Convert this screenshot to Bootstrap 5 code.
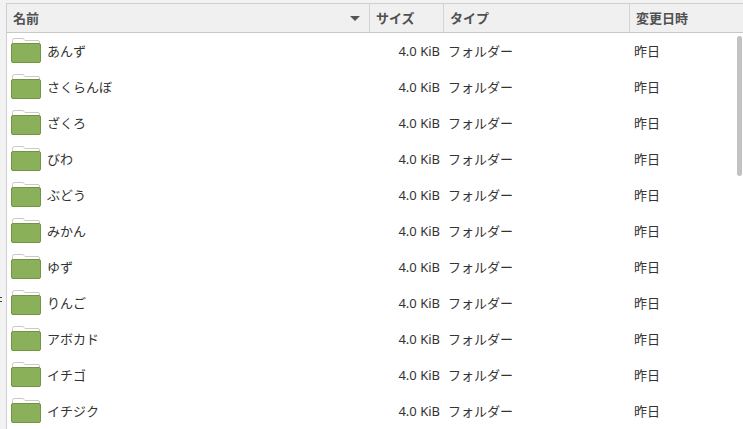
<!DOCTYPE html>
<html lang="ja">
<head>
<meta charset="utf-8">
<title>Files</title>
<link rel="stylesheet" href="https://cdn.jsdelivr.net/npm/bootstrap@5.3.0/dist/css/bootstrap.min.css">
<style>
html,body{height:429px;overflow:hidden;background:#f2f2f2;}
body{font-family:"Noto Sans","Noto Sans CJK JP",sans-serif;font-size:13px;color:#333;line-height:18px;}
.fm-frame{height:429px;padding-top:3px;padding-left:6px;position:relative;}
.fm-pane{height:426px;border-top:1px solid #cfcfcf;border-left:1px solid #cfcfcf;background:#fff;overflow:hidden;position:relative;}
.fm-head{height:29px;background:#f0f0f0;border-bottom:1px solid #c8c8c8;font-weight:700;color:#505050;}
.fm-head>div{height:28px;display:flex;align-items:center;border-right:1px solid #d4d4d4;}
.c-name{width:363px;flex:none;}
.c-size{width:74px;flex:none;}
.c-type{width:186px;flex:none;}
.c-date{flex:1 1 auto;}
.fm-head .c-name{padding:0 5px 0 6px;justify-content:space-between;}
.fm-head .c-size{padding-left:6px;}
.fm-head .c-type{padding-left:6px;}
.fm-head .c-date{padding-left:6px;border-right:0;}
.sort-arrow{width:0;height:0;border-left:5px solid transparent;border-right:5px solid transparent;border-top:5px solid #555;margin-right:4px;}
.fm-row{height:36px;display:flex;align-items:center;}
.fm-row .c-name{display:flex;align-items:center;gap:6px;padding-left:4px;}
.fm-row .c-size{text-align:right;padding-right:4px;}
.fm-row .c-type{padding-left:4px;}
.fm-row .c-date{padding-left:4px;}
.folder-ico{width:30px;height:26px;flex:none;display:block;}
.fm-thumb{position:absolute;right:1px;top:32px;width:5px;height:140px;background:#c2c2c2;border-radius:3px;}
.fm-grip{position:absolute;left:0;top:297px;width:2px;height:5px;border-top:1px solid #444;border-bottom:1px solid #444;}
</style>
</head>
<body>
<div class="fm-frame">
<div class="fm-grip"></div>
<div class="fm-pane">
<div class="fm-head d-flex">
<div class="c-name"><span>名前</span><span class="sort-arrow"></span></div>
<div class="c-size">サイズ</div>
<div class="c-type">タイプ</div>
<div class="c-date">変更日時</div>
</div>
<div id="rows"></div>
<div class="fm-thumb"></div>
</div>
</div>
<script>
var names=["あんず","さくらんぼ","ざくろ","びわ","ぶどう","みかん","ゆず","りんご","アボカド","イチゴ","イチジク"];
var ico='<svg class="folder-ico" viewBox="0 0 30 26"><path d="M1.5 6V2.2Q1.5 0.5 3.2 0.5H11Q12.5 0.5 13.3 1.6L14 2.5H27Q28.5 2.5 28.5 4V6" fill="#fff" stroke="#c9c9c9"/><rect x="0.5" y="5.5" width="29" height="19" rx="1.5" fill="#8bb05a" stroke="#759345"/></svg>';
document.getElementById("rows").innerHTML=names.map(function(n){
return '<div class="fm-row"><div class="c-name">'+ico+'<span>'+n+'</span></div><div class="c-size">4.0 KiB</div><div class="c-type">フォルダー</div><div class="c-date">昨日</div></div>';
}).join("");
</script>
<script src="https://cdn.jsdelivr.net/npm/bootstrap@5.3.0/dist/js/bootstrap.bundle.min.js"></script>
</body>
</html>
